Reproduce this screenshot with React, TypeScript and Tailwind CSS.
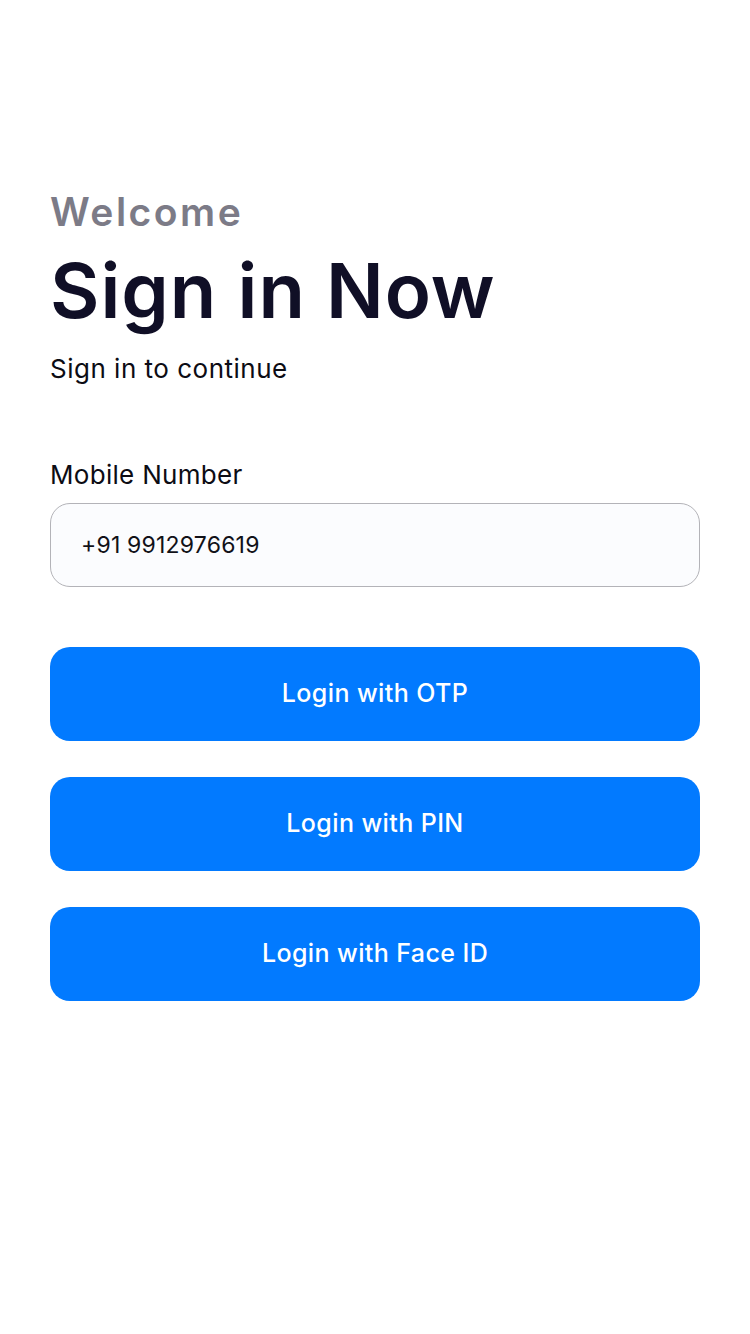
import React from "react";

const App = (): JSX.Element => {
  const buttons = ["Login with OTP", "Login with PIN", "Login with Face ID"];

  return (
    <div className="min-h-screen w-full bg-white px-[50px] pt-[188px] font-['Inter',sans-serif]">
      <p className="text-[39px] font-semibold leading-[48px] tracking-[2.5px] text-[#7c7b87]">Welcome</p>
      <h1 className="mt-[12px] text-[76px] font-semibold leading-[84px] tracking-[1px] text-[#100f26]">
        Sign in Now
      </h1>
      <p className="mt-[20px] text-[26px] leading-[34px] tracking-[0.5px] text-[#0c0c14]">Sign in to continue</p>

      <label className="mt-[72px] block text-[26px] leading-[34px] tracking-[0.3px] text-[#0c0c14]">
        Mobile Number
      </label>
      <div className="mt-[11px] flex h-[84px] items-center rounded-[20px] border border-[#b3b3b8] bg-[#fbfcfe] px-[30px]">
        <span className="text-[23px] tracking-[0.2px] text-[#111118]">+91 9912976619</span>
      </div>

      <div className="mt-[60px] flex flex-col gap-[36px]">
        {buttons.map((b) => (
          <button
            key={b}
            className="flex h-[94px] w-full items-center justify-center rounded-[20px] bg-[#027aff] text-[25px] font-medium tracking-[0.4px] text-white"
          >
            {b}
          </button>
        ))}
      </div>
    </div>
  );
};

export default App;
